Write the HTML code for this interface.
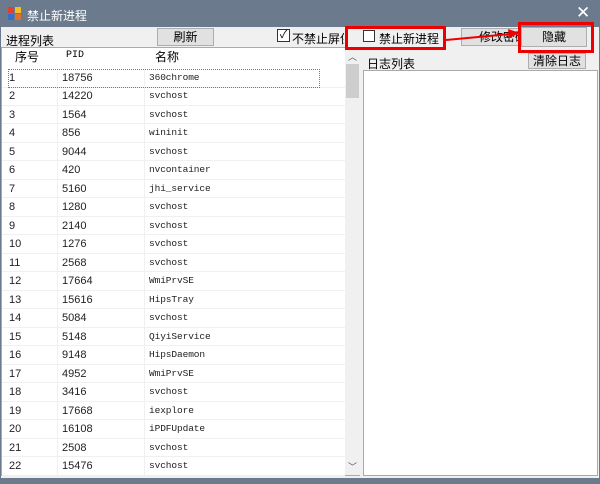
<!DOCTYPE html>
<html><head><meta charset="utf-8"><style>
*{margin:0;padding:0;box-sizing:border-box}
body{width:600px;height:484px;background:#6b7b8d;position:relative;overflow:hidden;font-family:"Liberation Sans","Noto Sans CJK SC",sans-serif;font-size:12px;color:#000}
.abs{position:absolute}
.title{left:0;top:0;width:600px;height:27px;background:#6b7b8d;color:#fff}
.client{left:1px;top:27px;width:598px;height:451px;background:#f0f0f0}
.btn{position:absolute;background:#e1e1e1;border:1px solid #adadad;text-align:center;font-size:12px;line-height:16px}
.row{position:absolute;left:2px;width:343px;height:18.5px;border-bottom:1px solid #f0f0f0;font-family:"Liberation Sans",sans-serif;font-size:11px;line-height:18px;color:#222}
.row span{position:absolute;top:0}
.row .n{font-family:"Liberation Mono",monospace;font-size:9.5px;letter-spacing:-0.1px}
</style></head><body>
<div class="abs title">
 <div class="abs" style="left:8px;top:7px;width:13px;height:13px">
  <div class="abs" style="left:0;top:0;width:6px;height:6px;background:#e04030"></div>
  <div class="abs" style="left:7px;top:0;width:6px;height:6px;background:#f0c020"></div>
  <div class="abs" style="left:0;top:7px;width:6px;height:6px;background:#3070d0"></div>
  <div class="abs" style="left:7px;top:7px;width:6px;height:6px;background:#e07030"></div>
 </div>
 <div class="abs" style="left:27px;top:7px;font-size:12px">禁止新进程</div>
 <div class="abs" style="left:576px;top:3px;font-size:17px">✕</div>
</div>
<div class="abs client"></div>
<div class="abs" style="left:6px;top:32px">进程列表</div>
<div class="btn" style="left:157px;top:28px;width:57px;height:18px;line-height:17px">刷新</div>
<div class="abs" style="left:277px;top:29px;width:13px;height:13px;border:1px solid #333;background:#fff;font-size:11px;line-height:11px;text-align:center">✓</div>
<div class="abs" style="left:292px;top:30px;width:52px;overflow:hidden;white-space:nowrap">不禁止屏保</div>
<!-- list -->
<div class="abs" style="left:1px;top:47px;width:359px;height:429px;background:#fff;border:1px solid #aaa"></div>
<div class="abs" style="left:15px;top:48px">序号</div>
<div class="abs" style="left:66px;top:50px;font-family:'Liberation Mono',monospace;font-size:10px">PID</div>
<div class="abs" style="left:155px;top:48px">名称</div>
<div class="abs" style="left:57px;top:69px;width:1px;height:406px;background:#f0f0f0"></div>
<div class="abs" style="left:144px;top:69px;width:1px;height:406px;background:#f0f0f0"></div>
<div id="rows"></div>
<div class="abs" style="left:8px;top:69px;width:312px;height:19px;border:1px dotted #777"></div>
<!-- scrollbar -->
<div class="abs" style="left:345px;top:48px;width:15px;height:427px;background:#f0f0f0"></div>
<div class="abs" style="left:346px;top:50px;width:13px;font-size:9px;text-align:center;color:#555">︿</div>
<div class="abs" style="left:346px;top:64px;width:13px;height:34px;background:#cdcdcd"></div>
<div class="abs" style="left:346px;top:460px;width:13px;font-size:9px;text-align:center;color:#555">﹀</div>
<!-- right panel -->
<div class="abs" style="left:363px;top:30px;width:12px;height:12px;border:1px solid #333;background:#fff"></div>
<div class="abs" style="left:379px;top:30px">禁止新进程</div>
<div class="btn" style="left:461px;top:28px;width:84px;height:18px;line-height:17px">修改密码</div>
<div class="btn" style="left:521px;top:27px;width:66px;height:20px;line-height:19px">隐藏</div>
<div class="abs" style="left:367px;top:55px">日志列表</div>
<div class="btn" style="left:528px;top:53px;width:58px;height:16px;line-height:15px">清除日志</div>
<div class="abs" style="left:363px;top:70px;width:235px;height:406px;background:#fff;border:1px solid #aaa"></div>
<!-- annotations -->
<div class="abs" style="left:345px;top:26px;width:101px;height:24px;border:3px solid #e00"></div>
<div class="abs" style="left:518px;top:22px;width:76px;height:31px;border:3px solid #e00"></div>
<svg class="abs" style="left:0;top:0" width="600" height="484"><line x1="446" y1="40" x2="510" y2="34" stroke="#e00" stroke-width="2"/><polygon points="520,33 508,29 509,38" fill="#e00"/></svg>
<script>
var d=[[1,18756,"360chrome"],[2,14220,"svchost"],[3,1564,"svchost"],[4,856,"wininit"],[5,9044,"svchost"],[6,420,"nvcontainer"],[7,5160,"jhi_service"],[8,1280,"svchost"],[9,2140,"svchost"],[10,1276,"svchost"],[11,2568,"svchost"],[12,17664,"WmiPrvSE"],[13,15616,"HipsTray"],[14,5084,"svchost"],[15,5148,"QiyiService"],[16,9148,"HipsDaemon"],[17,4952,"WmiPrvSE"],[18,3416,"svchost"],[19,17668,"iexplore"],[20,16108,"iPDFUpdate"],[21,2508,"svchost"],[22,15476,"svchost"]];
var h="";d.forEach(function(r,i){h+='<div class="row" style="top:'+(69+i*18.48)+'px"><span style="left:7px">'+r[0]+'</span><span style="left:60px">'+r[1]+'</span><span class="n" style="left:147px">'+r[2]+'</span></div>'});
document.getElementById("rows").innerHTML=h;
</script>
</body></html>
